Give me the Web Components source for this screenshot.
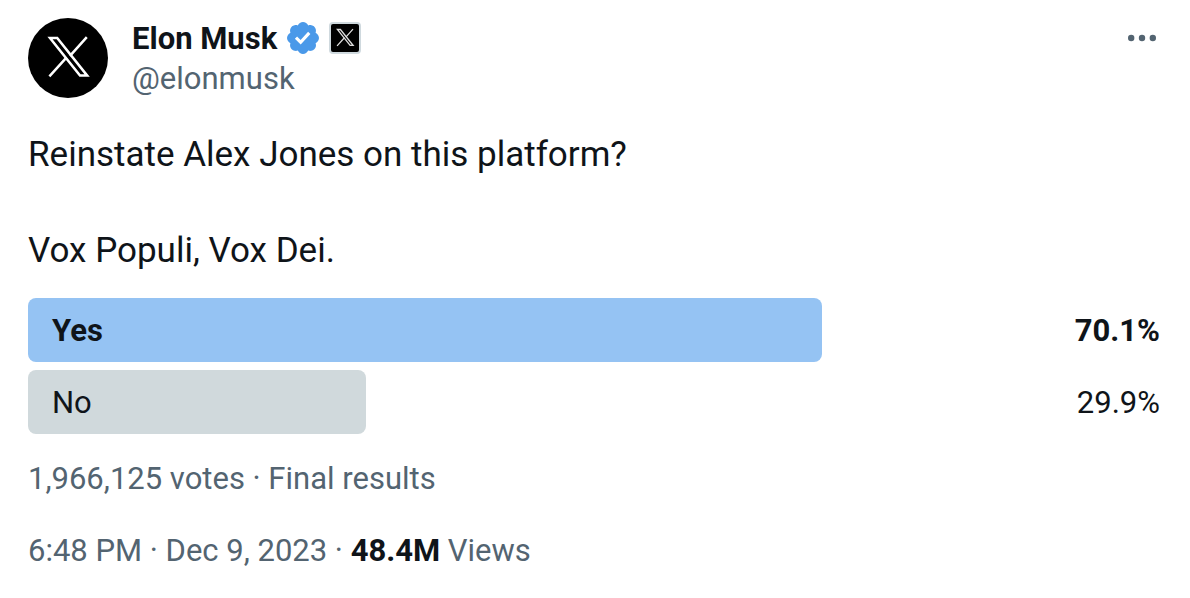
<!DOCTYPE html>
<html lang="en">
<head>
<meta charset="utf-8">
<title>Elon Musk on X</title>
<style>
  body { margin: 0; background: #fff; color: #0f1419; font: 31px/40px Roboto, "Liberation Sans", sans-serif; }
</style>
</head>
<body>
<post-card>
  <post-author slot="author" name="Elon Musk" handle="@elonmusk"></post-author>
  <p slot="text">Reinstate Alex Jones on this platform?</p>
  <p slot="text">Vox Populi, Vox Dei.</p>
  <poll-option slot="poll" label="Yes" share="70.1" winner></poll-option>
  <poll-option slot="poll" label="No" share="29.9"></poll-option>
  <span slot="votes">1,966,125 votes · Final results</span>
  <post-meta slot="meta" time="6:48 PM · Dec 9, 2023" views="48.4M"></post-meta>
</post-card>

<script>
const define = (name, html, setup) => {
  const template = document.createElement('template');
  template.innerHTML = html;
  customElements.define(name, class extends HTMLElement {
    connectedCallback() {
      if (this.shadowRoot) return;
      const root = this.attachShadow({ mode: 'open' });
      root.append(template.content.cloneNode(true));
      root.querySelectorAll('[data-attr]').forEach(el => {
        el.textContent = this.getAttribute(el.dataset.attr);
      });
      if (setup) setup(this, root);
    }
  });
};

define('x-mark', `
  <style>
    :host { display: flex; align-items: center; justify-content: center; background: #000; box-sizing: border-box; overflow: hidden; }
    svg { display: block; flex: none; width: var(--mark-size, 80px); height: var(--mark-size, 80px); fill: none; stroke: var(--mark-color, #fff); stroke-width: var(--mark-stroke, 2.5); }
  </style>
  <svg viewBox="0 0 80 80" aria-hidden="true">
    <path d="M22 20H29.2L59.2 57.6H52Z"/>
    <path d="M58.8 19.2L42 37.8M21.4 58.4L38.6 39.4"/>
  </svg>`);

define('verified-badge', `
  <style>
    :host { display: block; width: 32px; height: 32px; }
    svg { display: block; width: 100%; height: 100%; fill: #4a99e9; }
  </style>
  <svg viewBox="1.6 1.6 18.8 18.8" role="img" aria-label="Verified account">
    <path d="M20.396 11c-.018-.646-.215-1.275-.57-1.816-.354-.54-.852-.972-1.438-1.246.223-.607.27-1.264.14-1.897-.131-.634-.437-1.218-.882-1.687-.47-.445-1.053-.75-1.687-.882-.633-.13-1.29-.083-1.897.14-.273-.587-.704-1.086-1.245-1.44S11.647 1.62 11 1.604c-.646.017-1.273.213-1.813.568s-.969.854-1.24 1.44c-.608-.223-1.267-.272-1.902-.14-.635.13-1.22.436-1.69.882-.445.47-.749 1.055-.878 1.688-.13.633-.08 1.29.144 1.896-.587.274-1.087.705-1.443 1.245-.356.54-.555 1.17-.574 1.817.02.647.218 1.276.574 1.817.356.54.856.972 1.443 1.245-.224.606-.274 1.263-.144 1.896.13.634.433 1.218.877 1.688.47.443 1.054.747 1.687.878.633.132 1.29.084 1.897-.136.274.586.705 1.084 1.246 1.439.54.354 1.17.551 1.816.569.647-.016 1.276-.213 1.817-.567s.972-.854 1.245-1.44c.604.239 1.266.296 1.903.164.636-.132 1.22-.447 1.68-.907.46-.46.776-1.044.908-1.681s.075-1.299-.165-1.903c.586-.274 1.084-.705 1.439-1.246.354-.54.551-1.17.569-1.816zM9.662 14.85l-3.429-3.428 1.293-1.302 2.072 2.072 4.4-4.794 1.347 1.246z"/>
  </svg>`);

define('post-author', `
  <style>
    :host { display: flex; align-items: flex-start; gap: 24px; }
    .avatar { width: 80px; height: 80px; border-radius: 50%; flex: none; }
    .names { flex: 1; min-width: 0; }
    .line { display: flex; align-items: center; gap: 10px; height: 40px; }
    .affiliate { width: 32px; height: 32px; border: 2px solid #cfd9de; border-radius: 4px; --mark-size: 34px; --mark-stroke: 3; --mark-color: #ddd; }
    a { color: inherit; text-decoration: none; }
    .line a, .handle { padding-top: 2px; }
    .name { font-weight: 700; }
    .handle { display: block; line-height: 38px; color: #536471; }
    button { display: flex; align-items: center; justify-content: center; height: 40px; padding: 0 4px; border: 0; background: none; cursor: pointer; }
    button svg { display: block; width: 28px; height: 8px; fill: #536471; }
  </style>
  <x-mark class="avatar"></x-mark>
  <div class="names">
    <div class="line">
      <a class="name" href="#author" data-attr="name"></a>
      <verified-badge></verified-badge>
      <x-mark class="affiliate"></x-mark>
    </div>
    <a class="handle" href="#author" data-attr="handle"></a>
  </div>
  <button type="button" aria-label="More">
    <svg viewBox="0 0 28 8" aria-hidden="true"><circle cx="3.2" cy="4" r="3.2"/><circle cx="14" cy="4" r="3.2"/><circle cx="24.8" cy="4" r="3.2"/></svg>
  </button>`);

define('poll-option', `
  <style>
    :host { display: grid; grid-template-columns: 1fr auto; align-items: center; height: 64px; }
    :host([winner]) { font-weight: 700; }
    .bar, .label, .share { grid-row: 1; }
    .bar { grid-column: 1 / -1; height: 100%; border-radius: 8px; background: #d0d9dc; }
    :host([winner]) .bar { background: #95c3f3; }
    .label, .share { padding-top: 2px; }
    .label { grid-column: 1; padding-left: 24px; }
    .share { grid-column: 2; }
  </style>
  <div class="bar"></div>
  <span class="label" data-attr="label"></span>
  <span class="share"></span>`,
  (host, root) => {
    const share = host.getAttribute('share') + '%';
    root.querySelector('.bar').style.width = share;
    root.querySelector('.share').textContent = share;
  });

define('post-meta', `
  <style>
    :host { display: block; color: #536471; }
    a { color: inherit; text-decoration: none; }
    strong { color: #0f1419; font-weight: 700; }
  </style>
  <a href="#post" data-attr="time"></a> · <strong data-attr="views"></strong> Views`);

define('post-card', `
  <style>
    :host { display: block; padding: 18px 30px 24px 28px; }
    .text { display: grid; gap: 48px; margin: 33px 0 23px; font-size: 35px; line-height: 48px; }
    ::slotted(p) { margin: 0; }
    .poll { display: grid; gap: 8px; }
    .votes { margin: 25px 0 32px; color: #536471; }
  </style>
  <article>
    <slot name="author"></slot>
    <div class="text"><slot name="text"></slot></div>
    <div class="poll"><slot name="poll"></slot></div>
    <div class="votes"><slot name="votes"></slot></div>
    <slot name="meta"></slot>
  </article>`);
</script>
</body>
</html>
